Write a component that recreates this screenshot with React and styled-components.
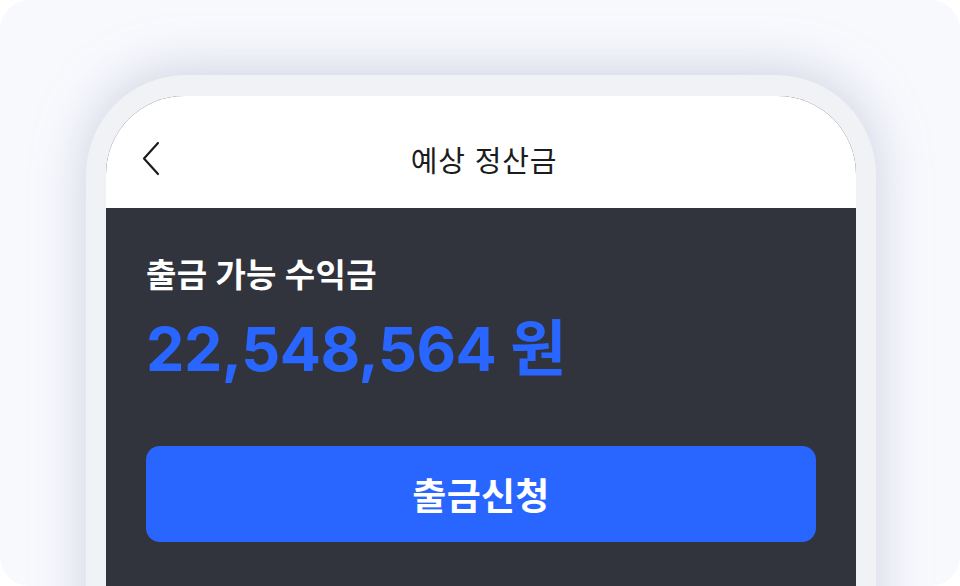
import React from 'react';
import styled, { createGlobalStyle } from 'styled-components';

const GlobalStyle = createGlobalStyle`
  html, body {
    margin: 0;
    padding: 0;
    background: #ffffff;
  }
  * {
    box-sizing: border-box;
  }
`;

export default function App() {
  return (
    <>
      <GlobalStyle />
      <Card>
        <Frame>
          <Screen>
            <Header>
              <BackButton aria-label="back">
                <svg width="20" height="36" viewBox="0 0 20 36" fill="none">
                  <path
                    d="M16 2L2 17.5L16 33"
                    stroke="#1b1c20"
                    strokeWidth="2.2"
                    strokeLinecap="round"
                    strokeLinejoin="round"
                  />
                </svg>
              </BackButton>
              <Title>예상 정산금</Title>
            </Header>
            <Body>
              <Label>출금 가능 수익금</Label>
              <Amount>22,548,564 원</Amount>
              <WithdrawButton>출금신청</WithdrawButton>
            </Body>
          </Screen>
        </Frame>
      </Card>
    </>
  );
}

const Card = styled.div`
  width: 960px;
  height: 586px;
  border-radius: 30px;
  background: #f8f9fd;
  overflow: hidden;
  display: flex;
  justify-content: center;
  padding: 75px 0 0 2px;
`;

const Frame = styled.div`
  width: 790px;
  height: 620px;
  padding: 21px 20px 0;
  border-radius: 100px 100px 0 0;
  background: #f1f2f5;
  box-shadow: 0 -4px 50px rgba(170, 177, 204, 0.55);
`;

const Screen = styled.div`
  height: 100%;
  border-radius: 78px 78px 0 0;
  overflow: hidden;
  background: #32343d;
  font-family: Inter, 'Noto Sans CJK KR', sans-serif;
`;

const Header = styled.div`
  height: 112px;
  padding: 14px 36px 0;
  background: #ffffff;
  display: grid;
  grid-template-columns: 1fr auto 1fr;
  align-items: center;
`;

const BackButton = styled.div`
  width: 20px;
  height: 36px;
  display: flex;
  cursor: pointer;
`;

const Title = styled.h1`
  margin: 0 0 0 6px;
  font-size: 29px;
  font-weight: 400;
  color: #1b1c20;
  letter-spacing: 0.8px;
`;

const Body = styled.div`
  padding: 47px 40px 0;
  display: flex;
  flex-direction: column;
`;

const Label = styled.div`
  font-size: 33px;
  line-height: 40px;
  font-weight: 700;
  color: #ffffff;
  letter-spacing: 0.3px;
`;

const Amount = styled.div`
  margin-top: 18px;
  font-size: 61px;
  line-height: 72px;
  font-weight: 700;
  color: #2966ff;
  letter-spacing: -0.5px;
`;

const WithdrawButton = styled.button`
  margin-top: 61px;
  height: 96px;
  width: 100%;
  border: none;
  border-radius: 14px;
  background: #2966ff;
  color: #ffffff;
  font-family: Inter, 'Noto Sans CJK KR', sans-serif;
  font-size: 37px;
  font-weight: 700;
  letter-spacing: 0.3px;
  cursor: pointer;
`;
